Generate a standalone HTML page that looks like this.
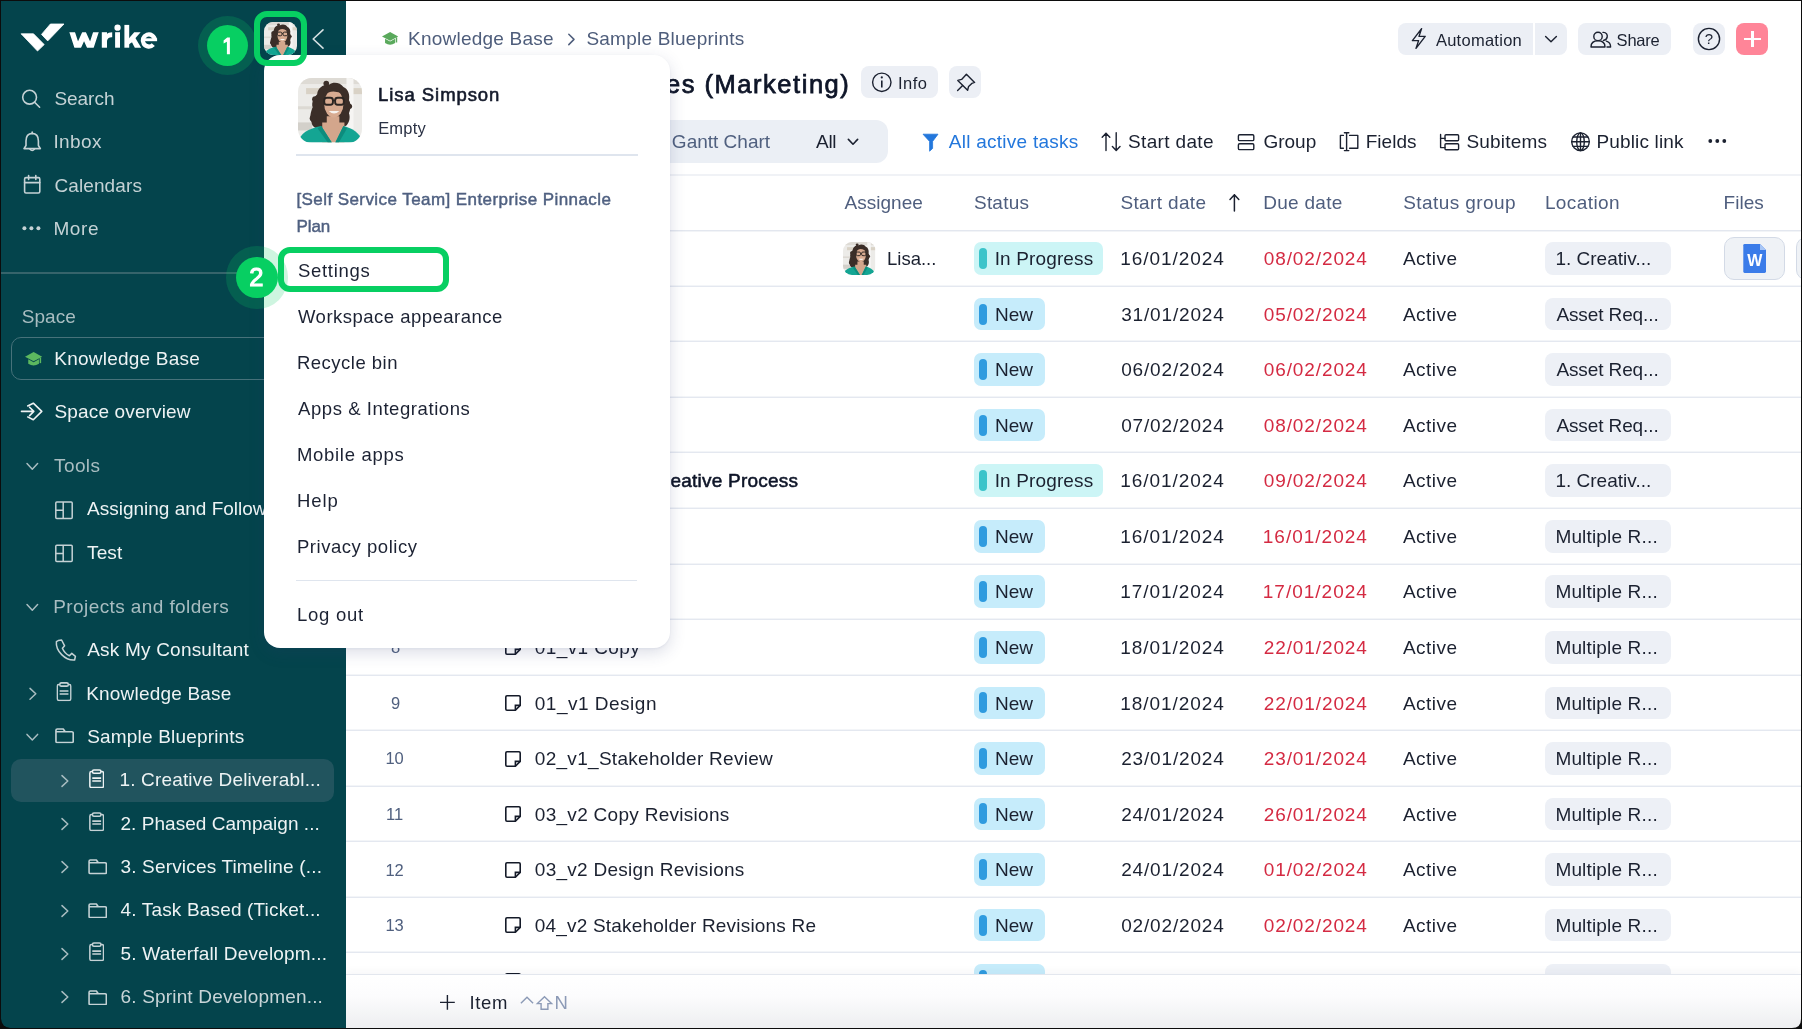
<!DOCTYPE html>
<html><head><meta charset="utf-8"><title>Wrike</title>
<style>
html,body{margin:0;padding:0;}
body{width:1802px;height:1029px;overflow:hidden;position:relative;background:#0c0c0c;font-family:'Liberation Sans', sans-serif;}
.layer{position:absolute;left:0;top:0;width:1802px;height:1029px;will-change:transform;}
.t{position:absolute;white-space:pre;line-height:0;font-family:'Liberation Sans', sans-serif;}
svg{display:block}
</style></head><body>
<svg width="0" height="0" style="position:absolute"><defs>
<symbol id="av" viewBox="0 0 64 64">
<rect width="64" height="64" fill="#ECEBE8"/>
<rect x="0" y="0" width="64" height="6" fill="#DEDBD5"/>
<rect x="8" y="10" width="56" height="6" fill="#D9D2C6"/>
<rect x="48" y="0" width="7" height="64" fill="#F6F5F3"/>
<rect x="0" y="28" width="14" height="3" fill="#DCD9D3"/>
<rect x="0" y="44" width="14" height="8" fill="#D3D0CA"/>
<path fill="#3B2E28" d="M13.5 44 C11 38 13 33 14.5 29 C13 24 16 19 19 16 C19.5 10 25 6 31 6.5 C35 3.5 42 4.5 45 9 C50 11 51.5 17 50.5 22 C53 26 52 31 50.5 35 C52 39 51 44 48 47 L44 49 L22 50 C17 50 14 48 13.5 44 Z"/>
<circle cx="15" cy="40" r="3.4" fill="#3B2E28"/><circle cx="17" cy="21" r="3" fill="#3B2E28"/><circle cx="51" cy="28" r="2.6" fill="#3B2E28"/><circle cx="28" cy="5.5" r="2.8" fill="#3B2E28"/>
<path d="M28.5 38 H41 V44 H46 V64 H24 V44 H28.5 Z" fill="#D3A68C"/>
<ellipse cx="35.5" cy="25.5" rx="9.6" ry="13.6" fill="#D8AB91"/>
<path d="M25.5 17 Q34 10 45.5 16.5 L45.5 13 Q35 7.5 25.5 13.5 Z" fill="#3B2E28"/>
<rect x="26" y="19.5" width="8.6" height="7" rx="2.5" fill="none" stroke="#2B2522" stroke-width="1.9"/>
<rect x="36.8" y="19.5" width="8.6" height="7" rx="2.5" fill="none" stroke="#2B2522" stroke-width="1.9"/>
<path d="M34.6 22.2 H36.8" stroke="#2B2522" stroke-width="1.5"/>
<path d="M30.5 32.6 Q35.8 37.6 41 32.6 Z" fill="#F7F3EF"/>
<path d="M0 64 C2 55 10 50 23 47.5 L33.5 64 Z" fill="#14A593"/>
<path d="M64 64 C62 55 55 50 45 47.5 L37 64 Z" fill="#14A593"/>
<path d="M23 47.5 L33.5 64 L29.5 64 L19.5 50 Z" fill="#0D8C7D"/>
<path d="M45 47.5 L37 64 L40.5 64 L48.5 50 Z" fill="#0D8C7D"/>
</symbol>
<symbol id="clip" viewBox="0 0 16 20">
<path d="M3.6 2.6 H2.6 Q0.9 2.6 0.9 4.3 V17.5 Q0.9 19.2 2.6 19.2 H13.4 Q15.1 19.2 15.1 17.5 V4.3 Q15.1 2.6 13.4 2.6 H12.4" fill="none" stroke="currentColor" stroke-width="1.6"/>
<rect x="3.6" y="0.9" width="8.8" height="3.4" rx="1.5" fill="none" stroke="currentColor" stroke-width="1.6"/>
<path d="M3.4 9.4 H12.6 M3.4 12.4 H12.6" stroke="currentColor" stroke-width="1.6"/>
</symbol>
<symbol id="folder" viewBox="0 0 20 16">
<path d="M1 14 V2.4 Q1 1 2.4 1 H8.6 L10.6 3.9 H17.6 Q19 3.9 19 5.3 V14 Q19 15.2 17.6 15.2 H2.4 Q1 15.2 1 14 Z M1 3.9 H10.6" fill="none" stroke="currentColor" stroke-width="1.7" stroke-linejoin="round"/>
</symbol>
<symbol id="task" viewBox="0 0 16 16">
<path d="M2 0.8 H14 Q15.2 0.8 15.2 2 V10.4 L10.4 15.2 H2 Q0.8 15.2 0.8 14 V2 Q0.8 0.8 2 0.8 Z" fill="none" stroke="#141A28" stroke-width="1.6" stroke-linejoin="round"/>
<path d="M15.2 10.4 H10.4 V15.2" fill="none" stroke="#141A28" stroke-width="1.6" stroke-linejoin="miter"/>
</symbol>
</defs></svg>
<div class="layer" id="L_base" style=""><div style="position:absolute;left:1.00px;top:1.00px;width:345.00px;height:1027.00px;background:#04444C;border-bottom-left-radius:9px;"></div>
<div style="position:absolute;left:346.00px;top:1.00px;width:1455.00px;height:1027.00px;background:#fff;border-bottom-right-radius:9px;"></div></div>
<div class="layer" id="L_side" style=""><svg style="position:absolute;left:20.00px;top:23.00px;overflow:visible;" width="140.00" height="29.00" viewBox="20.00 23.00 140.00 29.00"><path d="M21.1 33.8 L33.5 33.8 L44.2 44.6 L37.5 51 Z" fill="#fff" stroke="#fff" stroke-width="0.8" stroke-linejoin="round"/><path d="M50.4 24 L64 24 L47.7 40.9 L41.5 34.4 Z" fill="#fff" stroke="#fff" stroke-width="0.8" stroke-linejoin="round"/></svg>
<svg style="position:absolute;left:60.00px;top:20.00px;overflow:visible;" width="102.00" height="32.00" viewBox="60.00 20.00 102.00 32.00"><defs><clipPath id="wclip"><rect x="60" y="32.2" width="102" height="15.5"/></clipPath></defs><polyline points="70.9,28.2 77.6,48.9 84.05,34.6 90.5,48.9 97.2,28.2" fill="none" stroke="#fff" stroke-width="5.4" stroke-linejoin="miter" stroke-miterlimit="10" clip-path="url(#wclip)"/><rect x="101.8" y="32.2" width="5.2" height="15.5" fill="#fff"/><path d="M104.4 41 C104.4 35 107 32.2 112.2 32.2 V37.2 C109 37.2 107 38.6 107 42 Z" fill="#fff"/><rect x="115.1" y="32.2" width="4.9" height="15.5" fill="#fff"/><circle cx="117.55" cy="27.7" r="3.15" fill="#fff"/><rect x="124.4" y="24.9" width="4.8" height="22.8" fill="#fff"/><path d="M128.8 38.4 L134.2 32.2 H140.6 L131.6 42.4 L128.8 44.6 Z" fill="#fff"/><path d="M131.2 40.8 L134.6 36.8 L141.2 47.7 H134.8 Z" fill="#fff"/><path d="M154.9 40 A6.05 6.05 0 1 0 153.3 44.6" fill="none" stroke="#fff" stroke-width="4.3"/><rect x="143" y="38.3" width="14.1" height="2.9" fill="#fff"/></svg>
<svg style="position:absolute;left:310.00px;top:28.00px;overflow:visible;" width="16.00" height="22.00" viewBox="310.00 28.00 16.00 22.00"><path d="M323 29.8 L313.2 39 L323 48.2" fill="none" stroke="#D5E0E2" stroke-width="1.6" stroke-linecap="round" stroke-linejoin="round"/></svg>
<svg style="position:absolute;left:20.00px;top:88.00px;overflow:visible;" width="22.00" height="22.00" viewBox="20.00 88.00 22.00 22.00"><circle cx="29.6" cy="97.2" r="6.9" fill="none" stroke="#C5D2D5" stroke-width="1.6" stroke-linecap="round" stroke-linejoin="round"/><path d="M34.6 102.2 L39.6 107.2" fill="none" stroke="#C5D2D5" stroke-width="1.6" stroke-linecap="round" stroke-linejoin="round"/></svg>
<svg style="position:absolute;left:22.00px;top:130.00px;overflow:visible;" width="20.00" height="23.00" viewBox="22.00 130.00 20.00 23.00"><path d="M32.2 133.4 C27.5 133.6 26 137.5 26 141 V145.5 L24 148.6 H40.4 L38.4 145.5 V141 C38.4 137.5 36.9 133.6 32.2 133.4 Z" fill="none" stroke="#C5D2D5" stroke-width="1.6" stroke-linecap="round" stroke-linejoin="round"/><path d="M32.2 132 V133.4 M29.9 149 Q32.2 152 34.5 149" fill="none" stroke="#C5D2D5" stroke-width="1.6" stroke-linecap="round" stroke-linejoin="round"/></svg>
<svg style="position:absolute;left:22.00px;top:173.00px;overflow:visible;" width="20.00" height="22.00" viewBox="22.00 173.00 20.00 22.00"><rect x="24.6" y="177.6" width="15.2" height="15.4" rx="1.4" fill="none" stroke="#C5D2D5" stroke-width="1.6" stroke-linecap="round" stroke-linejoin="round"/><path d="M24.6 182.6 H39.8 M28.6 175.6 V179.4 M35.8 175.6 V179.4" fill="none" stroke="#C5D2D5" stroke-width="1.6" stroke-linecap="round" stroke-linejoin="round"/></svg>
<svg style="position:absolute;left:20.00px;top:224.00px;overflow:visible;" width="24.00" height="8.00" viewBox="20.00 224.00 24.00 8.00"><circle cx="24.4" cy="228.2" r="2" fill="#C5D2D5"/><circle cx="31.4" cy="228.2" r="2" fill="#C5D2D5"/><circle cx="38.4" cy="228.2" r="2" fill="#C5D2D5"/></svg>
<div class="t " style="left:54.40px;top:99.22px;font-size:19px;font-weight:400;color:#C5D2D5;letter-spacing:-0.027px;">Search</div>
<div class="t " style="left:53.40px;top:142.22px;font-size:19px;font-weight:400;color:#C5D2D5;letter-spacing:0.380px;">Inbox</div>
<div class="t " style="left:54.40px;top:185.52px;font-size:19px;font-weight:400;color:#C5D2D5;letter-spacing:0.112px;">Calendars</div>
<div class="t " style="left:53.40px;top:229.32px;font-size:19px;font-weight:400;color:#C5D2D5;letter-spacing:0.593px;">More</div>
<div style="position:absolute;left:1.00px;top:272.00px;width:345.00px;height:1.50px;background:#36646B;"></div>
<div class="t " style="left:21.80px;top:317.22px;font-size:19px;font-weight:400;color:#A9BDC1;letter-spacing:0.023px;">Space</div>
<div style="position:absolute;left:10.50px;top:337.40px;width:324.00px;height:42.80px;box-sizing:border-box;border:1.3px solid #47727A;border-radius:10px;"></div>
<svg style="position:absolute;left:24.00px;top:350.00px;overflow:visible;" width="20.00" height="18.00" viewBox="24.00 350.00 20.00 18.00"><path d="M25.00 356.65 L33.60 352.00 L42.20 356.65 L33.60 361.31 Z" fill="#5CB85F"/><path d="M28.24 359.28 L33.60 362.22 L38.96 359.28 V363.74 Q33.60 367.38 28.24 363.74 Z" fill="#5CB85F"/><path d="M40.38 357.67 V363.13" stroke="#5CB85F" stroke-width="1.52"/></svg>
<div class="t " style="left:54.30px;top:359.22px;font-size:19px;font-weight:400;color:#EEF3F4;letter-spacing:0.228px;">Knowledge Base</div>
<svg style="position:absolute;left:19.00px;top:400.00px;overflow:visible;" width="25.00" height="22.00" viewBox="19.00 400.00 25.00 22.00"><path d="M21.5 411.4 H33.5 M29.6 407.2 L33.8 411.4 L29.6 415.6" fill="none" stroke="#EEF3F4" stroke-width="1.6" stroke-linecap="round" stroke-linejoin="round"/><path d="M27.2 406.2 L33.3 403.2 L41.8 411.4 L33.3 419.8 L27.2 416.6" fill="none" stroke="#EEF3F4" stroke-width="1.6" stroke-linejoin="round"/></svg>
<div class="t " style="left:54.50px;top:412.42px;font-size:19px;font-weight:400;color:#EEF3F4;letter-spacing:0.146px;">Space overview</div>
<svg style="position:absolute;left:24.00px;top:460.00px;overflow:visible;" width="16.00" height="12.00" viewBox="24.00 460.00 16.00 12.00"><path d="M27.00 463.60 L32.30 469.20 L37.60 463.60" fill="none" stroke="#A9BDC1" stroke-width="1.5" stroke-linecap="round" stroke-linejoin="round"/></svg>
<div class="t " style="left:54.00px;top:466.32px;font-size:19px;font-weight:400;color:#A9BDC1;letter-spacing:0.411px;">Tools</div>
<svg style="position:absolute;left:54.00px;top:500.00px;overflow:visible;" width="20.00" height="20.00" viewBox="54.00 500.00 20.00 20.00"><rect x="55.80" y="502.10" width="16.4" height="16.4" rx="1" fill="none" stroke="#C5D2D5" stroke-width="1.5"/><path d="M63.20 502.10 V518.50 M55.80 510.30 H63.20" stroke="#C5D2D5" stroke-width="1.5"/></svg>
<div class="t " style="left:87.00px;top:509.22px;font-size:19px;font-weight:400;color:#EEF3F4;letter-spacing:0.000px;">Assigning and Following</div>
<svg style="position:absolute;left:54.00px;top:543.00px;overflow:visible;" width="20.00" height="20.00" viewBox="54.00 543.00 20.00 20.00"><rect x="55.80" y="545.20" width="16.4" height="16.4" rx="1" fill="none" stroke="#C5D2D5" stroke-width="1.5"/><path d="M63.20 545.20 V561.60 M55.80 553.40 H63.20" stroke="#C5D2D5" stroke-width="1.5"/></svg>
<div class="t " style="left:87.00px;top:552.92px;font-size:19px;font-weight:400;color:#EEF3F4;letter-spacing:0.144px;">Test</div>
<svg style="position:absolute;left:24.00px;top:602.00px;overflow:visible;" width="16.00" height="10.00" viewBox="24.00 602.00 16.00 10.00"><path d="M27.00 604.60 L32.30 610.20 L37.60 604.60" fill="none" stroke="#A9BDC1" stroke-width="1.5" stroke-linecap="round" stroke-linejoin="round"/></svg>
<div class="t " style="left:53.30px;top:606.62px;font-size:19px;font-weight:400;color:#A9BDC1;letter-spacing:0.399px;">Projects and folders</div>
<svg style="position:absolute;left:52.00px;top:637.00px;overflow:visible;" width="26.00" height="25.00" viewBox="52.00 637.00 26.00 25.00"><path d="M58.2 640.6 L61.6 640 L64.6 645.8 L62.4 648.2 C63.8 651.6 66.4 654.4 69.4 655.8 L71.8 653.4 L75.4 656.4 L74.6 660 C65.4 660.8 55.4 651 56.4 641.6 Z" fill="none" stroke="#C5D2D5" stroke-width="1.5" stroke-linejoin="round"/></svg>
<div class="t " style="left:87.20px;top:650.42px;font-size:19px;font-weight:400;color:#EEF3F4;letter-spacing:0.205px;">Ask My Consultant</div>
<svg style="position:absolute;left:26.00px;top:686.00px;overflow:visible;" width="14.00" height="15.00" viewBox="26.00 686.00 14.00 15.00"><path d="M30.00 688.40 L35.80 693.80 L30.00 699.20" fill="none" stroke="#A9BDC1" stroke-width="1.5" stroke-linecap="round" stroke-linejoin="round"/></svg>
<svg style="position:absolute;left:55.7px;top:682.4px;color:#C5D2D5" width="16.1" height="19.2" viewBox="0 0 16 20"><use href="#clip"/></svg>
<div class="t " style="left:86.20px;top:693.62px;font-size:19px;font-weight:400;color:#EEF3F4;letter-spacing:0.190px;">Knowledge Base</div>
<svg style="position:absolute;left:24.00px;top:731.00px;overflow:visible;" width="16.00" height="11.00" viewBox="24.00 731.00 16.00 11.00"><path d="M27.00 734.40 L32.30 740.00 L37.60 734.40" fill="none" stroke="#A9BDC1" stroke-width="1.5" stroke-linecap="round" stroke-linejoin="round"/></svg>
<svg style="position:absolute;left:54.9px;top:728.4px;color:#C5D2D5" width="19.2" height="15.4" viewBox="0 0 20 16"><use href="#folder"/></svg>
<div class="t " style="left:87.20px;top:737.02px;font-size:19px;font-weight:400;color:#EEF3F4;letter-spacing:0.182px;">Sample Blueprints</div>
<div style="position:absolute;left:10.70px;top:758.50px;width:323.50px;height:43.00px;background:#21545E;border-radius:10px;"></div>
<svg style="position:absolute;left:58.00px;top:773.60px;overflow:visible;" width="14.00" height="14.00" viewBox="58.00 773.60 14.00 14.00"><path d="M62.00 775.20 L67.80 780.60 L62.00 786.00" fill="none" stroke="#A9BDC1" stroke-width="1.5" stroke-linecap="round" stroke-linejoin="round"/></svg>
<svg style="position:absolute;left:89px;top:768.90px;color:#EEF3F4" width="15.4" height="19.4" viewBox="0 0 16 20"><use href="#clip"/></svg>
<div class="t " style="left:119.50px;top:780.22px;font-size:19px;font-weight:400;color:#EEF3F4;letter-spacing:0.159px;">1. Creative Deliverabl...</div>
<svg style="position:absolute;left:58.00px;top:816.96px;overflow:visible;" width="14.00" height="14.00" viewBox="58.00 816.96 14.00 14.00"><path d="M62.00 818.56 L67.80 823.96 L62.00 829.36" fill="none" stroke="#A9BDC1" stroke-width="1.5" stroke-linecap="round" stroke-linejoin="round"/></svg>
<svg style="position:absolute;left:89px;top:812.26px;color:#C5D2D5" width="15.4" height="19.4" viewBox="0 0 16 20"><use href="#clip"/></svg>
<div class="t " style="left:120.50px;top:823.58px;font-size:19px;font-weight:400;color:#EEF3F4;letter-spacing:0.034px;">2. Phased Campaign ...</div>
<svg style="position:absolute;left:58.00px;top:860.32px;overflow:visible;" width="14.00" height="14.00" viewBox="58.00 860.32 14.00 14.00"><path d="M62.00 861.92 L67.80 867.32 L62.00 872.72" fill="none" stroke="#A9BDC1" stroke-width="1.5" stroke-linecap="round" stroke-linejoin="round"/></svg>
<svg style="position:absolute;left:87.5px;top:859.42px;color:#C5D2D5" width="19.4" height="15.4" viewBox="0 0 20 16"><use href="#folder"/></svg>
<div class="t " style="left:120.50px;top:866.94px;font-size:19px;font-weight:400;color:#EEF3F4;letter-spacing:0.166px;">3. Services Timeline (...</div>
<svg style="position:absolute;left:58.00px;top:903.68px;overflow:visible;" width="14.00" height="14.00" viewBox="58.00 903.68 14.00 14.00"><path d="M62.00 905.28 L67.80 910.68 L62.00 916.08" fill="none" stroke="#A9BDC1" stroke-width="1.5" stroke-linecap="round" stroke-linejoin="round"/></svg>
<svg style="position:absolute;left:87.5px;top:902.78px;color:#C5D2D5" width="19.4" height="15.4" viewBox="0 0 20 16"><use href="#folder"/></svg>
<div class="t " style="left:120.50px;top:910.30px;font-size:19px;font-weight:400;color:#EEF3F4;letter-spacing:0.162px;">4. Task Based (Ticket...</div>
<svg style="position:absolute;left:58.00px;top:947.04px;overflow:visible;" width="14.00" height="14.00" viewBox="58.00 947.04 14.00 14.00"><path d="M62.00 948.64 L67.80 954.04 L62.00 959.44" fill="none" stroke="#A9BDC1" stroke-width="1.5" stroke-linecap="round" stroke-linejoin="round"/></svg>
<svg style="position:absolute;left:89px;top:942.34px;color:#C5D2D5" width="15.4" height="19.4" viewBox="0 0 16 20"><use href="#clip"/></svg>
<div class="t " style="left:120.50px;top:953.66px;font-size:19px;font-weight:400;color:#EEF3F4;letter-spacing:0.198px;">5. Waterfall Developm...</div>
<svg style="position:absolute;left:58.00px;top:990.40px;overflow:visible;" width="14.00" height="14.00" viewBox="58.00 990.40 14.00 14.00"><path d="M62.00 992.00 L67.80 997.40 L62.00 1002.80" fill="none" stroke="#A9BDC1" stroke-width="1.5" stroke-linecap="round" stroke-linejoin="round"/></svg>
<svg style="position:absolute;left:87.5px;top:989.50px;color:#C5D2D5" width="19.4" height="15.4" viewBox="0 0 20 16"><use href="#folder"/></svg>
<div class="t " style="left:120.50px;top:997.02px;font-size:19px;font-weight:400;color:#C9D5D8;letter-spacing:0.174px;">6. Sprint Developmen...</div></div>
<div class="layer" id="L_main" style="clip-path: inset(1px 1px 1px 346px);"><svg style="position:absolute;left:380.00px;top:30.00px;overflow:visible;" width="20.00" height="17.00" viewBox="380.00 30.00 20.00 17.00"><path d="M382.00 36.38 L390.10 32.00 L398.20 36.38 L390.10 40.77 Z" fill="#5AA95C"/><path d="M385.05 38.86 L390.10 41.62 L395.15 38.86 V43.05 Q390.10 46.48 385.05 43.05 Z" fill="#5AA95C"/><path d="M396.48 37.34 V42.48" stroke="#5AA95C" stroke-width="1.43"/></svg>
<div class="t " style="left:408.00px;top:39.42px;font-size:19px;font-weight:400;color:#4E5D7B;letter-spacing:0.228px;">Knowledge Base</div>
<svg style="position:absolute;left:565.00px;top:32.00px;overflow:visible;" width="13.00" height="15.00" viewBox="565.00 32.00 13.00 15.00"><path d="M568.8 34.2 L574 39.4 L568.8 44.6" fill="none" stroke="#4E5D7B" stroke-width="1.5" stroke-linecap="round" stroke-linejoin="round"/></svg>
<div class="t " style="left:586.40px;top:39.42px;font-size:19px;font-weight:400;color:#4E5D7B;letter-spacing:0.232px;">Sample Blueprints</div>
<div class="t " style="left:666.00px;top:83.66px;font-size:25.5px;font-weight:400;color:#0E1528;letter-spacing:1.525px;-webkit-text-stroke:0.75px currentColor;">es (Marketing)</div>
<div style="position:absolute;left:860.70px;top:66.00px;width:77.30px;height:32.20px;background:#ECEFF5;border-radius:8px;"></div>
<svg style="position:absolute;left:870.00px;top:72.00px;overflow:visible;" width="24.00" height="21.00" viewBox="870.00 72.00 24.00 21.00"><circle cx="881.8" cy="82.3" r="9.2" fill="none" stroke="#1B2130" stroke-width="1.4"/><path d="M881.8 80.4 V87.6" stroke="#1B2130" stroke-width="1.6"/><circle cx="881.8" cy="77.4" r="1.1" fill="#1B2130"/></svg>
<div class="t " style="left:898.00px;top:82.58px;font-size:16.5px;font-weight:400;color:#1B2130;letter-spacing:0.452px;">Info</div>
<div style="position:absolute;left:949.10px;top:66.00px;width:32.40px;height:32.20px;background:#ECEFF5;border-radius:8px;"></div>
<svg style="position:absolute;left:955.00px;top:72.00px;overflow:visible;" width="21.00" height="21.00" viewBox="955.00 72.00 21.00 21.00"><path d="M966.4 74.2 L974.6 82.4 L971.8 83.4 L968.6 86.4 L967.6 90.2 L957.8 80.4 L961.6 79.4 L964.6 76.2 Z" fill="none" stroke="#1B2130" stroke-width="1.4" stroke-linejoin="round"/><path d="M962.6 85.4 L957.6 90.4" stroke="#1B2130" stroke-width="1.4" stroke-linecap="round"/></svg>
<div style="position:absolute;left:1397.60px;top:23.00px;width:169.40px;height:32.00px;background:#ECEFF5;border-radius:8px;"></div>
<div style="position:absolute;left:1533.20px;top:23.00px;width:2.00px;height:32.00px;background:#fff;"></div>
<svg style="position:absolute;left:1408.00px;top:26.00px;overflow:visible;" width="22.00" height="25.00" viewBox="1408.00 26.00 22.00 25.00"><path d="M1421.6 28.6 L1412.4 40.6 H1418.6 L1416 48.4 L1425.2 36.4 H1419 Z" fill="none" stroke="#1B2130" stroke-width="1.4" stroke-linejoin="round"/></svg>
<div class="t " style="left:1435.90px;top:39.58px;font-size:16.5px;font-weight:400;color:#1B2130;letter-spacing:0.268px;">Automation</div>
<svg style="position:absolute;left:1542.00px;top:33.00px;overflow:visible;" width="18.00" height="13.00" viewBox="1542.00 33.00 18.00 13.00"><path d="M1545.6 36.4 L1551 41.8 L1556.4 36.4" fill="none" stroke="#1B2130" stroke-width="1.4" stroke-linecap="round" stroke-linejoin="round"/></svg>
<div style="position:absolute;left:1578.30px;top:23.00px;width:92.40px;height:32.00px;background:#ECEFF5;border-radius:8px;"></div>
<svg style="position:absolute;left:1588.00px;top:29.00px;overflow:visible;" width="26.00" height="21.00" viewBox="1588.00 29.00 26.00 21.00"><circle cx="1598" cy="36.4" r="4.2" fill="none" stroke="#1B2130" stroke-width="1.4"/><path d="M1591 47 C1591 42.6 1594 40.8 1598 40.8 C1602 40.8 1605 42.6 1605 47 Z" fill="none" stroke="#1B2130" stroke-width="1.4" stroke-linejoin="round"/><path d="M1603 32.4 C1606.6 32.2 1607.6 35 1607.2 37 C1606.8 39 1605 40.2 1603.4 40.4 M1606.4 41.2 C1609 42 1610.6 43.6 1610.6 47 H1607" fill="none" stroke="#1B2130" stroke-width="1.4" stroke-linecap="round" stroke-linejoin="round"/></svg>
<div class="t " style="left:1616.60px;top:39.58px;font-size:16.5px;font-weight:400;color:#1B2130;letter-spacing:-0.213px;">Share</div>
<div style="position:absolute;left:1693.00px;top:23.00px;width:32.00px;height:32.00px;background:#ECEFF5;border-radius:8px;"></div>
<svg style="position:absolute;left:1695.00px;top:26.00px;overflow:visible;" width="28.00" height="26.00" viewBox="1695.00 26.00 28.00 26.00"><circle cx="1709" cy="39" r="10.6" fill="none" stroke="#1B2130" stroke-width="1.4"/></svg>
<div class="t " style="left:1709.00px;top:39.40px;font-size:15px;font-weight:400;color:#1B2130;letter-spacing:0.000px;transform:translateX(-50%);">?</div>
<div style="position:absolute;left:1736.30px;top:23.00px;width:32.10px;height:32.00px;background:#FF8598;border-radius:8px;"></div>
<div style="position:absolute;left:1744.00px;top:37.80px;width:16.60px;height:2.60px;background:#fff;"></div>
<div style="position:absolute;left:1751.00px;top:30.80px;width:2.60px;height:16.60px;background:#fff;"></div>
<div style="position:absolute;left:380.00px;top:120.20px;width:507.70px;height:43.00px;background:#EBEFF5;border-radius:12px;"></div>
<div class="t " style="left:671.87px;top:142.02px;font-size:19px;font-weight:400;color:#50607F;letter-spacing:0.000px;">Gantt Chart</div>
<div class="t " style="left:816.10px;top:142.02px;font-size:19px;font-weight:400;color:#1B2130;letter-spacing:-0.347px;">All</div>
<svg style="position:absolute;left:845.00px;top:136.00px;overflow:visible;" width="16.00" height="12.00" viewBox="845.00 136.00 16.00 12.00"><path d="M848.4 139.4 L853 144.2 L857.6 139.4" fill="none" stroke="#1B2130" stroke-width="1.6" stroke-linecap="round" stroke-linejoin="round"/></svg>
<svg style="position:absolute;left:921.00px;top:132.00px;overflow:visible;" width="19.00" height="21.00" viewBox="921.00 132.00 19.00 21.00"><path d="M923 134.2 H938 L932.6 141.4 V148.4 L929.6 151.2 V141.4 Z" fill="#2377DC" stroke="#2377DC" stroke-width="0.8" stroke-linejoin="round"/></svg>
<div class="t " style="left:948.80px;top:141.92px;font-size:19px;font-weight:400;color:#2377DC;letter-spacing:0.257px;">All active tasks</div>
<svg style="position:absolute;left:1100.00px;top:130.00px;overflow:visible;" width="22.00" height="23.00" viewBox="1100.00 130.00 22.00 23.00"><path d="M1106 150.6 V133.2 M1102.2 137.2 L1106 133.2 L1109.8 137.2 M1116.2 132.8 V150.4 M1112.4 146.4 L1116.2 150.4 L1120 146.4" fill="none" stroke="#1B2130" stroke-width="1.4" stroke-linecap="round" stroke-linejoin="round"/></svg>
<div class="t " style="left:1128.00px;top:141.82px;font-size:19px;font-weight:400;color:#1B2130;letter-spacing:0.354px;">Start date</div>
<svg style="position:absolute;left:1236.00px;top:132.00px;overflow:visible;" width="20.00" height="20.00" viewBox="1236.00 132.00 20.00 20.00"><rect x="1238.4" y="134.8" width="15.4" height="5.8" rx="1.2" fill="none" stroke="#1B2130" stroke-width="1.4" stroke-linecap="round" stroke-linejoin="round"/><rect x="1238.4" y="143.8" width="15.4" height="5.8" rx="1.2" fill="none" stroke="#1B2130" stroke-width="1.4" stroke-linecap="round" stroke-linejoin="round"/></svg>
<div class="t " style="left:1263.40px;top:141.82px;font-size:19px;font-weight:400;color:#1B2130;letter-spacing:0.015px;">Group</div>
<svg style="position:absolute;left:1338.00px;top:130.00px;overflow:visible;" width="22.00" height="23.00" viewBox="1338.00 130.00 22.00 23.00"><path d="M1343.4 135.4 H1340.4 V148.2 H1343.4 M1349.6 135.4 H1357.8 V148.2 H1349.6 M1346.6 132.8 V150.6 M1344.4 132.8 H1348.8 M1344.4 150.6 H1348.8" fill="none" stroke="#1B2130" stroke-width="1.4" stroke-linecap="round" stroke-linejoin="round"/></svg>
<div class="t " style="left:1365.70px;top:141.82px;font-size:19px;font-weight:400;color:#1B2130;letter-spacing:0.024px;">Fields</div>
<svg style="position:absolute;left:1438.00px;top:132.00px;overflow:visible;" width="23.00" height="20.00" viewBox="1438.00 132.00 23.00 20.00"><path d="M1440.6 134.4 V147.6 H1445" fill="none" stroke="#1B2130" stroke-width="1.4" stroke-linecap="round" stroke-linejoin="round"/><path d="M1440.6 138.4 H1445" fill="none" stroke="#1B2130" stroke-width="1.4" stroke-linecap="round" stroke-linejoin="round"/><rect x="1445" y="134.8" width="13.6" height="6" rx="1" fill="none" stroke="#1B2130" stroke-width="1.4" stroke-linecap="round" stroke-linejoin="round"/><rect x="1445" y="143.8" width="13.6" height="6" rx="1" fill="none" stroke="#1B2130" stroke-width="1.4" stroke-linecap="round" stroke-linejoin="round"/></svg>
<div class="t " style="left:1466.40px;top:141.82px;font-size:19px;font-weight:400;color:#1B2130;letter-spacing:0.186px;">Subitems</div>
<svg style="position:absolute;left:1569.00px;top:130.00px;overflow:visible;" width="24.00" height="23.00" viewBox="1569.00 130.00 24.00 23.00"><circle cx="1580.5" cy="141.7" r="8.8" fill="none" stroke="#1B2130" stroke-width="1.4" stroke-linecap="round" stroke-linejoin="round"/><ellipse cx="1580.5" cy="141.7" rx="3.8" ry="8.8" fill="none" stroke="#1B2130" stroke-width="1.4" stroke-linecap="round" stroke-linejoin="round"/><path d="M1571.7 141.7 H1589.3 M1573 137 H1588 M1573 146.4 H1588 M1580.5 132.9 V150.5" fill="none" stroke="#1B2130" stroke-width="1.4" stroke-linecap="round" stroke-linejoin="round"/></svg>
<div class="t " style="left:1596.40px;top:141.82px;font-size:19px;font-weight:400;color:#1B2130;letter-spacing:0.166px;">Public link</div>
<svg style="position:absolute;left:1706.00px;top:138.00px;overflow:visible;" width="22.00" height="6.00" viewBox="1706.00 138.00 22.00 6.00"><circle cx="1710.3" cy="141" r="1.9" fill="#1B2130"/><circle cx="1717.3" cy="141" r="1.9" fill="#1B2130"/><circle cx="1724.3" cy="141" r="1.9" fill="#1B2130"/></svg>
<div style="position:absolute;left:346.00px;top:174.00px;width:1455.00px;height:2.00px;background:#F0F2F6;"></div>
<div class="t " style="left:844.50px;top:203.42px;font-size:19px;font-weight:400;color:#4F5E7E;letter-spacing:0.029px;">Assignee</div>
<div class="t " style="left:974.00px;top:203.42px;font-size:19px;font-weight:400;color:#4F5E7E;letter-spacing:0.207px;">Status</div>
<div class="t " style="left:1120.40px;top:203.42px;font-size:19px;font-weight:400;color:#4F5E7E;letter-spacing:0.365px;">Start date</div>
<div class="t " style="left:1263.20px;top:203.42px;font-size:19px;font-weight:400;color:#4F5E7E;letter-spacing:0.279px;">Due date</div>
<div class="t " style="left:1403.20px;top:203.42px;font-size:19px;font-weight:400;color:#4F5E7E;letter-spacing:0.421px;">Status group</div>
<div class="t " style="left:1544.90px;top:203.42px;font-size:19px;font-weight:400;color:#4F5E7E;letter-spacing:0.405px;">Location</div>
<div class="t " style="left:1723.60px;top:203.42px;font-size:19px;font-weight:400;color:#4F5E7E;letter-spacing:-0.004px;">Files</div>
<svg style="position:absolute;left:1226.00px;top:192.00px;overflow:visible;" width="17.00" height="21.00" viewBox="1226.00 192.00 17.00 21.00"><path d="M1234.4 211 V194.8 M1230 199.4 L1234.4 194.8 L1238.8 199.4" fill="none" stroke="#1B2130" stroke-width="1.5" stroke-linecap="round" stroke-linejoin="round"/></svg>
<div style="position:absolute;left:346.00px;top:230.00px;width:1455.00px;height:2.00px;background:linear-gradient(#E3E7EF 50%, #F2F4F7 50%);"></div>
<div class="t " style="left:394.60px;top:258.18px;font-size:16.5px;font-weight:400;color:#50607F;letter-spacing:0.000px;transform:translateX(-50%);">1</div>
<svg style="position:absolute;left:505px;top:251px" width="16" height="16" viewBox="0 0 16 16"><use href="#task"/></svg>
<div style="position:absolute;left:974.00px;top:242.22px;width:129.40px;height:32.60px;background:#CCF5F6;border-radius:7px;"></div>
<div style="position:absolute;left:978.90px;top:248.02px;width:8.10px;height:21.00px;background:#3CC4CA;border-radius:4px;"></div>
<div class="t " style="left:994.70px;top:258.92px;font-size:19px;font-weight:400;color:#1B2130;letter-spacing:0.135px;">In Progress</div>
<div class="t " style="left:1120.20px;top:258.92px;font-size:19px;font-weight:400;color:#1B2130;letter-spacing:0.942px;">16/01/2024</div>
<div class="t " style="left:1263.80px;top:258.92px;font-size:19px;font-weight:400;color:#D42A42;letter-spacing:0.886px;">08/02/2024</div>
<div class="t " style="left:1403.00px;top:258.92px;font-size:19px;font-weight:400;color:#1B2130;letter-spacing:0.445px;">Active</div>
<div style="position:absolute;left:1545.20px;top:242.22px;width:125.60px;height:32.60px;background:#EDF0F6;border-radius:8px;"></div>
<div class="t " style="left:1555.40px;top:258.92px;font-size:19px;font-weight:400;color:#1B2130;letter-spacing:0.012px;">1. Creativ...</div>
<div style="position:absolute;left:346.00px;top:285.00px;width:1455.00px;height:2.00px;background:linear-gradient(#F3F5F8 50%, #E4E8F0 50%);"></div>
<div class="t " style="left:395.60px;top:313.76px;font-size:16.5px;font-weight:400;color:#50607F;letter-spacing:0.000px;transform:translateX(-50%);">2</div>
<svg style="position:absolute;left:505px;top:306px" width="16" height="16" viewBox="0 0 16 16"><use href="#task"/></svg>
<div style="position:absolute;left:974.00px;top:297.77px;width:71.00px;height:32.60px;background:#C6ECFB;border-radius:7px;"></div>
<div style="position:absolute;left:978.90px;top:303.57px;width:8.10px;height:21.00px;background:#2F9BDF;border-radius:4px;"></div>
<div class="t " style="left:994.90px;top:314.50px;font-size:19px;font-weight:400;color:#1B2130;letter-spacing:0.056px;">New</div>
<div class="t " style="left:1121.20px;top:314.50px;font-size:19px;font-weight:400;color:#1B2130;letter-spacing:0.830px;">31/01/2024</div>
<div class="t " style="left:1263.80px;top:314.50px;font-size:19px;font-weight:400;color:#D42A42;letter-spacing:0.886px;">05/02/2024</div>
<div class="t " style="left:1403.00px;top:314.50px;font-size:19px;font-weight:400;color:#1B2130;letter-spacing:0.445px;">Active</div>
<div style="position:absolute;left:1545.20px;top:297.77px;width:125.60px;height:32.60px;background:#EDF0F6;border-radius:8px;"></div>
<div class="t " style="left:1556.40px;top:314.50px;font-size:19px;font-weight:400;color:#1B2130;letter-spacing:-0.110px;">Asset Req...</div>
<div style="position:absolute;left:346.00px;top:340.00px;width:1455.00px;height:2.00px;background:linear-gradient(#F3F5F8 50%, #E4E8F0 50%);"></div>
<div class="t " style="left:395.60px;top:369.34px;font-size:16.5px;font-weight:400;color:#50607F;letter-spacing:0.000px;transform:translateX(-50%);">3</div>
<svg style="position:absolute;left:505px;top:362px" width="16" height="16" viewBox="0 0 16 16"><use href="#task"/></svg>
<div style="position:absolute;left:974.00px;top:353.31px;width:71.00px;height:32.60px;background:#C6ECFB;border-radius:7px;"></div>
<div style="position:absolute;left:978.90px;top:359.11px;width:8.10px;height:21.00px;background:#2F9BDF;border-radius:4px;"></div>
<div class="t " style="left:994.90px;top:370.08px;font-size:19px;font-weight:400;color:#1B2130;letter-spacing:0.056px;">New</div>
<div class="t " style="left:1121.20px;top:370.08px;font-size:19px;font-weight:400;color:#1B2130;letter-spacing:0.830px;">06/02/2024</div>
<div class="t " style="left:1263.80px;top:370.08px;font-size:19px;font-weight:400;color:#D42A42;letter-spacing:0.886px;">06/02/2024</div>
<div class="t " style="left:1403.00px;top:370.08px;font-size:19px;font-weight:400;color:#1B2130;letter-spacing:0.445px;">Active</div>
<div style="position:absolute;left:1545.20px;top:353.31px;width:125.60px;height:32.60px;background:#EDF0F6;border-radius:8px;"></div>
<div class="t " style="left:1556.40px;top:370.08px;font-size:19px;font-weight:400;color:#1B2130;letter-spacing:-0.110px;">Asset Req...</div>
<div style="position:absolute;left:346.00px;top:396.00px;width:1455.00px;height:2.00px;background:linear-gradient(#F3F5F8 50%, #E4E8F0 50%);"></div>
<div class="t " style="left:395.60px;top:424.92px;font-size:16.5px;font-weight:400;color:#50607F;letter-spacing:0.000px;transform:translateX(-50%);">4</div>
<svg style="position:absolute;left:505px;top:417px" width="16" height="16" viewBox="0 0 16 16"><use href="#task"/></svg>
<div style="position:absolute;left:974.00px;top:408.86px;width:71.00px;height:32.60px;background:#C6ECFB;border-radius:7px;"></div>
<div style="position:absolute;left:978.90px;top:414.66px;width:8.10px;height:21.00px;background:#2F9BDF;border-radius:4px;"></div>
<div class="t " style="left:994.90px;top:425.66px;font-size:19px;font-weight:400;color:#1B2130;letter-spacing:0.056px;">New</div>
<div class="t " style="left:1121.20px;top:425.66px;font-size:19px;font-weight:400;color:#1B2130;letter-spacing:0.830px;">07/02/2024</div>
<div class="t " style="left:1263.80px;top:425.66px;font-size:19px;font-weight:400;color:#D42A42;letter-spacing:0.886px;">08/02/2024</div>
<div class="t " style="left:1403.00px;top:425.66px;font-size:19px;font-weight:400;color:#1B2130;letter-spacing:0.445px;">Active</div>
<div style="position:absolute;left:1545.20px;top:408.86px;width:125.60px;height:32.60px;background:#EDF0F6;border-radius:8px;"></div>
<div class="t " style="left:1556.40px;top:425.66px;font-size:19px;font-weight:400;color:#1B2130;letter-spacing:-0.110px;">Asset Req...</div>
<div style="position:absolute;left:346.00px;top:451.00px;width:1455.00px;height:2.00px;background:linear-gradient(#F3F5F8 50%, #E4E8F0 50%);"></div>
<div class="t " style="left:395.60px;top:480.50px;font-size:16.5px;font-weight:400;color:#50607F;letter-spacing:0.000px;transform:translateX(-50%);">5</div>
<div class="t " style="left:670.50px;top:481.24px;font-size:19px;font-weight:400;color:#0E1528;letter-spacing:0.230px;-webkit-text-stroke:0.55px currentColor;">eative Process</div>
<div style="position:absolute;left:974.00px;top:464.40px;width:129.40px;height:32.60px;background:#CCF5F6;border-radius:7px;"></div>
<div style="position:absolute;left:978.90px;top:470.20px;width:8.10px;height:21.00px;background:#3CC4CA;border-radius:4px;"></div>
<div class="t " style="left:994.70px;top:481.24px;font-size:19px;font-weight:400;color:#1B2130;letter-spacing:0.135px;">In Progress</div>
<div class="t " style="left:1120.20px;top:481.24px;font-size:19px;font-weight:400;color:#1B2130;letter-spacing:0.942px;">16/01/2024</div>
<div class="t " style="left:1263.80px;top:481.24px;font-size:19px;font-weight:400;color:#D42A42;letter-spacing:0.886px;">09/02/2024</div>
<div class="t " style="left:1403.00px;top:481.24px;font-size:19px;font-weight:400;color:#1B2130;letter-spacing:0.445px;">Active</div>
<div style="position:absolute;left:1545.20px;top:464.40px;width:125.60px;height:32.60px;background:#EDF0F6;border-radius:8px;"></div>
<div class="t " style="left:1555.40px;top:481.24px;font-size:19px;font-weight:400;color:#1B2130;letter-spacing:0.012px;">1. Creativ...</div>
<div style="position:absolute;left:346.00px;top:507.00px;width:1455.00px;height:2.00px;background:linear-gradient(#F3F5F8 50%, #E4E8F0 50%);"></div>
<div class="t " style="left:395.60px;top:536.08px;font-size:16.5px;font-weight:400;color:#50607F;letter-spacing:0.000px;transform:translateX(-50%);">6</div>
<svg style="position:absolute;left:505px;top:528px" width="16" height="16" viewBox="0 0 16 16"><use href="#task"/></svg>
<div style="position:absolute;left:974.00px;top:519.95px;width:71.00px;height:32.60px;background:#C6ECFB;border-radius:7px;"></div>
<div style="position:absolute;left:978.90px;top:525.75px;width:8.10px;height:21.00px;background:#2F9BDF;border-radius:4px;"></div>
<div class="t " style="left:994.90px;top:536.82px;font-size:19px;font-weight:400;color:#1B2130;letter-spacing:0.056px;">New</div>
<div class="t " style="left:1120.20px;top:536.82px;font-size:19px;font-weight:400;color:#1B2130;letter-spacing:0.942px;">16/01/2024</div>
<div class="t " style="left:1262.80px;top:536.82px;font-size:19px;font-weight:400;color:#D42A42;letter-spacing:0.997px;">16/01/2024</div>
<div class="t " style="left:1403.00px;top:536.82px;font-size:19px;font-weight:400;color:#1B2130;letter-spacing:0.445px;">Active</div>
<div style="position:absolute;left:1545.20px;top:519.95px;width:125.60px;height:32.60px;background:#EDF0F6;border-radius:8px;"></div>
<div class="t " style="left:1555.40px;top:536.82px;font-size:19px;font-weight:400;color:#1B2130;letter-spacing:0.164px;">Multiple R...</div>
<div style="position:absolute;left:346.00px;top:563.00px;width:1455.00px;height:2.00px;background:linear-gradient(#F3F5F8 50%, #E4E8F0 50%);"></div>
<div class="t " style="left:395.60px;top:591.66px;font-size:16.5px;font-weight:400;color:#50607F;letter-spacing:0.000px;transform:translateX(-50%);">7</div>
<svg style="position:absolute;left:505px;top:584px" width="16" height="16" viewBox="0 0 16 16"><use href="#task"/></svg>
<div style="position:absolute;left:974.00px;top:575.49px;width:71.00px;height:32.60px;background:#C6ECFB;border-radius:7px;"></div>
<div style="position:absolute;left:978.90px;top:581.29px;width:8.10px;height:21.00px;background:#2F9BDF;border-radius:4px;"></div>
<div class="t " style="left:994.90px;top:592.40px;font-size:19px;font-weight:400;color:#1B2130;letter-spacing:0.056px;">New</div>
<div class="t " style="left:1120.20px;top:592.40px;font-size:19px;font-weight:400;color:#1B2130;letter-spacing:0.942px;">17/01/2024</div>
<div class="t " style="left:1262.80px;top:592.40px;font-size:19px;font-weight:400;color:#D42A42;letter-spacing:0.997px;">17/01/2024</div>
<div class="t " style="left:1403.00px;top:592.40px;font-size:19px;font-weight:400;color:#1B2130;letter-spacing:0.445px;">Active</div>
<div style="position:absolute;left:1545.20px;top:575.49px;width:125.60px;height:32.60px;background:#EDF0F6;border-radius:8px;"></div>
<div class="t " style="left:1555.40px;top:592.40px;font-size:19px;font-weight:400;color:#1B2130;letter-spacing:0.164px;">Multiple R...</div>
<div style="position:absolute;left:346.00px;top:618.00px;width:1455.00px;height:2.00px;background:linear-gradient(#F3F5F8 50%, #E4E8F0 50%);"></div>
<div class="t " style="left:395.60px;top:647.24px;font-size:16.5px;font-weight:400;color:#50607F;letter-spacing:0.000px;transform:translateX(-50%);">8</div>
<svg style="position:absolute;left:505px;top:639px" width="16" height="16" viewBox="0 0 16 16"><use href="#task"/></svg>
<div class="t " style="left:534.80px;top:647.98px;font-size:19px;font-weight:400;color:#1B2130;letter-spacing:0.400px;">01_v1 Copy</div>
<div style="position:absolute;left:974.00px;top:631.04px;width:71.00px;height:32.60px;background:#C6ECFB;border-radius:7px;"></div>
<div style="position:absolute;left:978.90px;top:636.84px;width:8.10px;height:21.00px;background:#2F9BDF;border-radius:4px;"></div>
<div class="t " style="left:994.90px;top:647.98px;font-size:19px;font-weight:400;color:#1B2130;letter-spacing:0.056px;">New</div>
<div class="t " style="left:1120.20px;top:647.98px;font-size:19px;font-weight:400;color:#1B2130;letter-spacing:0.942px;">18/01/2024</div>
<div class="t " style="left:1263.80px;top:647.98px;font-size:19px;font-weight:400;color:#D42A42;letter-spacing:0.886px;">22/01/2024</div>
<div class="t " style="left:1403.00px;top:647.98px;font-size:19px;font-weight:400;color:#1B2130;letter-spacing:0.445px;">Active</div>
<div style="position:absolute;left:1545.20px;top:631.04px;width:125.60px;height:32.60px;background:#EDF0F6;border-radius:8px;"></div>
<div class="t " style="left:1555.40px;top:647.98px;font-size:19px;font-weight:400;color:#1B2130;letter-spacing:0.164px;">Multiple R...</div>
<div style="position:absolute;left:346.00px;top:674.00px;width:1455.00px;height:2.00px;background:linear-gradient(#F3F5F8 50%, #E4E8F0 50%);"></div>
<div class="t " style="left:395.60px;top:702.82px;font-size:16.5px;font-weight:400;color:#50607F;letter-spacing:0.000px;transform:translateX(-50%);">9</div>
<svg style="position:absolute;left:505px;top:695px" width="16" height="16" viewBox="0 0 16 16"><use href="#task"/></svg>
<div class="t " style="left:534.80px;top:703.56px;font-size:19px;font-weight:400;color:#1B2130;letter-spacing:0.498px;">01_v1 Design</div>
<div style="position:absolute;left:974.00px;top:686.58px;width:71.00px;height:32.60px;background:#C6ECFB;border-radius:7px;"></div>
<div style="position:absolute;left:978.90px;top:692.38px;width:8.10px;height:21.00px;background:#2F9BDF;border-radius:4px;"></div>
<div class="t " style="left:994.90px;top:703.56px;font-size:19px;font-weight:400;color:#1B2130;letter-spacing:0.056px;">New</div>
<div class="t " style="left:1120.20px;top:703.56px;font-size:19px;font-weight:400;color:#1B2130;letter-spacing:0.942px;">18/01/2024</div>
<div class="t " style="left:1263.80px;top:703.56px;font-size:19px;font-weight:400;color:#D42A42;letter-spacing:0.886px;">22/01/2024</div>
<div class="t " style="left:1403.00px;top:703.56px;font-size:19px;font-weight:400;color:#1B2130;letter-spacing:0.445px;">Active</div>
<div style="position:absolute;left:1545.20px;top:686.58px;width:125.60px;height:32.60px;background:#EDF0F6;border-radius:8px;"></div>
<div class="t " style="left:1555.40px;top:703.56px;font-size:19px;font-weight:400;color:#1B2130;letter-spacing:0.164px;">Multiple R...</div>
<div style="position:absolute;left:346.00px;top:729.00px;width:1455.00px;height:2.00px;background:linear-gradient(#F3F5F8 50%, #E4E8F0 50%);"></div>
<div class="t " style="left:394.60px;top:758.40px;font-size:16.5px;font-weight:400;color:#50607F;letter-spacing:0.000px;transform:translateX(-50%);">10</div>
<svg style="position:absolute;left:505px;top:751px" width="16" height="16" viewBox="0 0 16 16"><use href="#task"/></svg>
<div class="t " style="left:534.80px;top:759.14px;font-size:19px;font-weight:400;color:#1B2130;letter-spacing:0.292px;">02_v1_Stakeholder Review</div>
<div style="position:absolute;left:974.00px;top:742.13px;width:71.00px;height:32.60px;background:#C6ECFB;border-radius:7px;"></div>
<div style="position:absolute;left:978.90px;top:747.93px;width:8.10px;height:21.00px;background:#2F9BDF;border-radius:4px;"></div>
<div class="t " style="left:994.90px;top:759.14px;font-size:19px;font-weight:400;color:#1B2130;letter-spacing:0.056px;">New</div>
<div class="t " style="left:1121.20px;top:759.14px;font-size:19px;font-weight:400;color:#1B2130;letter-spacing:0.830px;">23/01/2024</div>
<div class="t " style="left:1263.80px;top:759.14px;font-size:19px;font-weight:400;color:#D42A42;letter-spacing:0.886px;">23/01/2024</div>
<div class="t " style="left:1403.00px;top:759.14px;font-size:19px;font-weight:400;color:#1B2130;letter-spacing:0.445px;">Active</div>
<div style="position:absolute;left:1545.20px;top:742.13px;width:125.60px;height:32.60px;background:#EDF0F6;border-radius:8px;"></div>
<div class="t " style="left:1555.40px;top:759.14px;font-size:19px;font-weight:400;color:#1B2130;letter-spacing:0.164px;">Multiple R...</div>
<div style="position:absolute;left:346.00px;top:785.00px;width:1455.00px;height:2.00px;background:linear-gradient(#F3F5F8 50%, #E4E8F0 50%);"></div>
<div class="t " style="left:394.60px;top:813.98px;font-size:16.5px;font-weight:400;color:#50607F;letter-spacing:0.000px;transform:translateX(-50%);">11</div>
<svg style="position:absolute;left:505px;top:806px" width="16" height="16" viewBox="0 0 16 16"><use href="#task"/></svg>
<div class="t " style="left:534.80px;top:814.72px;font-size:19px;font-weight:400;color:#1B2130;letter-spacing:0.287px;">03_v2 Copy Revisions</div>
<div style="position:absolute;left:974.00px;top:797.67px;width:71.00px;height:32.60px;background:#C6ECFB;border-radius:7px;"></div>
<div style="position:absolute;left:978.90px;top:803.47px;width:8.10px;height:21.00px;background:#2F9BDF;border-radius:4px;"></div>
<div class="t " style="left:994.90px;top:814.72px;font-size:19px;font-weight:400;color:#1B2130;letter-spacing:0.056px;">New</div>
<div class="t " style="left:1121.20px;top:814.72px;font-size:19px;font-weight:400;color:#1B2130;letter-spacing:0.830px;">24/01/2024</div>
<div class="t " style="left:1263.80px;top:814.72px;font-size:19px;font-weight:400;color:#D42A42;letter-spacing:0.886px;">26/01/2024</div>
<div class="t " style="left:1403.00px;top:814.72px;font-size:19px;font-weight:400;color:#1B2130;letter-spacing:0.445px;">Active</div>
<div style="position:absolute;left:1545.20px;top:797.67px;width:125.60px;height:32.60px;background:#EDF0F6;border-radius:8px;"></div>
<div class="t " style="left:1555.40px;top:814.72px;font-size:19px;font-weight:400;color:#1B2130;letter-spacing:0.164px;">Multiple R...</div>
<div style="position:absolute;left:346.00px;top:840.00px;width:1455.00px;height:2.00px;background:linear-gradient(#F3F5F8 50%, #E4E8F0 50%);"></div>
<div class="t " style="left:394.60px;top:869.56px;font-size:16.5px;font-weight:400;color:#50607F;letter-spacing:0.000px;transform:translateX(-50%);">12</div>
<svg style="position:absolute;left:505px;top:862px" width="16" height="16" viewBox="0 0 16 16"><use href="#task"/></svg>
<div class="t " style="left:534.80px;top:870.30px;font-size:19px;font-weight:400;color:#1B2130;letter-spacing:0.270px;">03_v2 Design Revisions</div>
<div style="position:absolute;left:974.00px;top:853.22px;width:71.00px;height:32.60px;background:#C6ECFB;border-radius:7px;"></div>
<div style="position:absolute;left:978.90px;top:859.02px;width:8.10px;height:21.00px;background:#2F9BDF;border-radius:4px;"></div>
<div class="t " style="left:994.90px;top:870.30px;font-size:19px;font-weight:400;color:#1B2130;letter-spacing:0.056px;">New</div>
<div class="t " style="left:1121.20px;top:870.30px;font-size:19px;font-weight:400;color:#1B2130;letter-spacing:0.830px;">24/01/2024</div>
<div class="t " style="left:1263.80px;top:870.30px;font-size:19px;font-weight:400;color:#D42A42;letter-spacing:0.886px;">01/02/2024</div>
<div class="t " style="left:1403.00px;top:870.30px;font-size:19px;font-weight:400;color:#1B2130;letter-spacing:0.445px;">Active</div>
<div style="position:absolute;left:1545.20px;top:853.22px;width:125.60px;height:32.60px;background:#EDF0F6;border-radius:8px;"></div>
<div class="t " style="left:1555.40px;top:870.30px;font-size:19px;font-weight:400;color:#1B2130;letter-spacing:0.164px;">Multiple R...</div>
<div style="position:absolute;left:346.00px;top:896.00px;width:1455.00px;height:2.00px;background:linear-gradient(#F3F5F8 50%, #E4E8F0 50%);"></div>
<div class="t " style="left:394.60px;top:925.14px;font-size:16.5px;font-weight:400;color:#50607F;letter-spacing:0.000px;transform:translateX(-50%);">13</div>
<svg style="position:absolute;left:505px;top:917px" width="16" height="16" viewBox="0 0 16 16"><use href="#task"/></svg>
<div class="t " style="left:534.80px;top:925.88px;font-size:19px;font-weight:400;color:#1B2130;letter-spacing:0.190px;">04_v2 Stakeholder Revisions Re</div>
<div style="position:absolute;left:974.00px;top:908.76px;width:71.00px;height:32.60px;background:#C6ECFB;border-radius:7px;"></div>
<div style="position:absolute;left:978.90px;top:914.56px;width:8.10px;height:21.00px;background:#2F9BDF;border-radius:4px;"></div>
<div class="t " style="left:994.90px;top:925.88px;font-size:19px;font-weight:400;color:#1B2130;letter-spacing:0.056px;">New</div>
<div class="t " style="left:1121.20px;top:925.88px;font-size:19px;font-weight:400;color:#1B2130;letter-spacing:0.830px;">02/02/2024</div>
<div class="t " style="left:1263.80px;top:925.88px;font-size:19px;font-weight:400;color:#D42A42;letter-spacing:0.886px;">02/02/2024</div>
<div class="t " style="left:1403.00px;top:925.88px;font-size:19px;font-weight:400;color:#1B2130;letter-spacing:0.445px;">Active</div>
<div style="position:absolute;left:1545.20px;top:908.76px;width:125.60px;height:32.60px;background:#EDF0F6;border-radius:8px;"></div>
<div class="t " style="left:1555.40px;top:925.88px;font-size:19px;font-weight:400;color:#1B2130;letter-spacing:0.164px;">Multiple R...</div>
<div style="position:absolute;left:346.00px;top:951.00px;width:1455.00px;height:2.00px;background:linear-gradient(#F3F5F8 50%, #E4E8F0 50%);"></div>
<div class="t " style="left:394.60px;top:980.72px;font-size:16.5px;font-weight:400;color:#50607F;letter-spacing:0.000px;transform:translateX(-50%);">14</div>
<svg style="position:absolute;left:505px;top:973px" width="16" height="16" viewBox="0 0 16 16"><use href="#task"/></svg>
<div class="t " style="left:534.80px;top:981.46px;font-size:19px;font-weight:400;color:#1B2130;letter-spacing:0.000px;">05_v1 Adaptations</div>
<div style="position:absolute;left:974.00px;top:964.31px;width:71.00px;height:32.60px;background:#C6ECFB;border-radius:7px;"></div>
<div style="position:absolute;left:978.90px;top:970.11px;width:8.10px;height:21.00px;background:#2F9BDF;border-radius:4px;"></div>
<div class="t " style="left:994.90px;top:981.46px;font-size:19px;font-weight:400;color:#1B2130;letter-spacing:0.056px;">New</div>
<div class="t " style="left:1121.20px;top:981.46px;font-size:19px;font-weight:400;color:#1B2130;letter-spacing:0.830px;">05/02/2024</div>
<div class="t " style="left:1263.80px;top:981.46px;font-size:19px;font-weight:400;color:#D42A42;letter-spacing:0.886px;">06/02/2024</div>
<div class="t " style="left:1403.00px;top:981.46px;font-size:19px;font-weight:400;color:#1B2130;letter-spacing:0.445px;">Active</div>
<div style="position:absolute;left:1545.20px;top:964.31px;width:125.60px;height:32.60px;background:#EDF0F6;border-radius:8px;"></div>
<div class="t " style="left:1555.40px;top:981.46px;font-size:19px;font-weight:400;color:#1B2130;letter-spacing:0.164px;">Multiple R...</div>
<svg style="position:absolute;left:843.3px;top:242px;border-radius:9px" width="32.4" height="33" viewBox="0 0 64 64" preserveAspectRatio="none"><use href="#av"/></svg>
<div class="t " style="left:887.00px;top:258.59px;font-size:18.5px;font-weight:400;color:#1B2130;letter-spacing:-0.003px;">Lisa...</div>
<div style="position:absolute;left:1724.30px;top:237.00px;width:60.30px;height:42.50px;box-sizing:border-box;background:#EFF2F6;border:1.3px solid #D3DAE6;border-radius:10px;"></div>
<div style="position:absolute;left:1795.70px;top:237.00px;width:34.30px;height:42.50px;box-sizing:border-box;background:#EFF2F6;border:1.3px solid #D3DAE6;border-radius:10px;"></div>
<svg style="position:absolute;left:1742.00px;top:243.00px;overflow:visible;" width="26.00" height="31.00" viewBox="1742.00 243.00 26.00 31.00"><path d="M1744.6 243.9 H1760 L1766 249.9 V271.6 Q1766 273 1764.6 273 H1744.6 Q1743.3 273 1743.3 271.6 V245.3 Q1743.3 243.9 1744.6 243.9 Z" fill="#3B7CE9"/><path d="M1760 243.9 L1766 249.9 H1760 Z" fill="#A8C6F6"/></svg>
<div class="t " style="left:1754.80px;top:260.66px;font-size:16px;font-weight:700;color:#fff;letter-spacing:0.000px;transform:translateX(-50%);">W</div></div>
<div class="layer" id="L_footer" style="clip-path: inset(1px 1px 1px 346px);"><div style="position:absolute;left:346.00px;top:974.00px;width:1455.00px;height:54.00px;background:linear-gradient(#FFFFFF, #FCFCFD 40%, #EDEEF0);border-top:1px solid #E3E7EE;box-sizing:border-box;box-shadow:0 -3px 8px rgba(30,40,70,0.035);"></div>
<svg style="position:absolute;left:437.00px;top:993.00px;overflow:visible;" width="21.00" height="20.00" viewBox="437.00 993.00 21.00 20.00"><path d="M447.4 995 V1009.8 M440 1002.4 H454.8" stroke="#1B2130" stroke-width="1.4"/></svg>
<div class="t " style="left:469.60px;top:1003.49px;font-size:18.5px;font-weight:400;color:#1B2130;letter-spacing:0.610px;">Item</div>
<svg style="position:absolute;left:518.00px;top:993.00px;overflow:visible;" width="52.00" height="19.00" viewBox="518.00 993.00 52.00 19.00"><path d="M521.4 1002.8 L527 997.2 L532.6 1002.8" fill="none" stroke="#8C9AB6" stroke-width="1.4" stroke-linecap="square" stroke-linejoin="miter"/><path d="M544.5 996.8 L551.6 1003.6 H547.9 V1009.2 H541.1 V1003.6 H537.4 Z" fill="none" stroke="#8C9AB6" stroke-width="1.4" stroke-linejoin="miter"/></svg>
<div class="t " style="left:554.40px;top:1003.49px;font-size:18.5px;font-weight:400;color:#8C9AB6;letter-spacing:0.000px;">N</div></div>
<div class="layer" id="L_menu" style=""><div style="position:absolute;left:263.70px;top:55.30px;width:406.30px;height:593.20px;background:#fff;border-radius:16px;box-shadow:0 5px 16px rgba(45,62,115,0.17), 0 1px 3px rgba(45,62,115,0.06);"></div>
<svg style="position:absolute;left:297.7px;top:78.3px;border-radius:14px" width="64.6" height="64.6" viewBox="0 0 64 64" preserveAspectRatio="none"><use href="#av"/></svg>
<div class="t " style="left:378.10px;top:95.49px;font-size:18.5px;font-weight:400;color:#141A2B;letter-spacing:0.930px;-webkit-text-stroke:0.6px currentColor;">Lisa Simpson</div>
<div class="t " style="left:378.20px;top:127.88px;font-size:16.5px;font-weight:400;color:#2B3245;letter-spacing:0.172px;">Empty</div>
<div style="position:absolute;left:296.00px;top:154.20px;width:341.60px;height:1.40px;background:#DFE5EE;"></div>
<div class="t " style="left:296.40px;top:200.21px;font-size:17px;font-weight:400;color:#4F6080;letter-spacing:0.428px;-webkit-text-stroke:0.45px currentColor;">[Self Service Team] Enterprise Pinnacle</div>
<div class="t " style="left:296.40px;top:227.11px;font-size:17px;font-weight:400;color:#4F6080;letter-spacing:-0.057px;-webkit-text-stroke:0.45px currentColor;">Plan</div>
<div class="t " style="left:298.00px;top:270.99px;font-size:18.5px;font-weight:400;color:#1C2233;letter-spacing:0.701px;">Settings</div>
<div class="t " style="left:298.00px;top:317.07px;font-size:18.5px;font-weight:400;color:#1C2233;letter-spacing:0.486px;">Workspace appearance</div>
<div class="t " style="left:297.00px;top:363.15px;font-size:18.5px;font-weight:400;color:#1C2233;letter-spacing:0.486px;">Recycle bin</div>
<div class="t " style="left:298.00px;top:409.23px;font-size:18.5px;font-weight:400;color:#1C2233;letter-spacing:0.577px;">Apps &amp; Integrations</div>
<div class="t " style="left:297.00px;top:455.31px;font-size:18.5px;font-weight:400;color:#1C2233;letter-spacing:0.690px;">Mobile apps</div>
<div class="t " style="left:297.00px;top:501.39px;font-size:18.5px;font-weight:400;color:#1C2233;letter-spacing:0.914px;">Help</div>
<div class="t " style="left:297.00px;top:547.47px;font-size:18.5px;font-weight:400;color:#1C2233;letter-spacing:0.528px;">Privacy policy</div>
<div style="position:absolute;left:296.40px;top:579.70px;width:341.10px;height:1.40px;background:#DFE5EE;"></div>
<div class="t " style="left:297.00px;top:614.99px;font-size:18.5px;font-weight:400;color:#1C2233;letter-spacing:0.736px;">Log out</div></div>
<div class="layer" id="L_anno" style=""><svg style="position:absolute;left:263.5px;top:22px;border-radius:9px" width="33.2" height="33.2" viewBox="0 0 64 64" preserveAspectRatio="none"><use href="#av"/></svg>
<div style="position:absolute;left:254.20px;top:10.80px;width:52.80px;height:55.00px;box-sizing:border-box;border:6px solid #07CF62;border-radius:13px;"></div>
<div style="position:absolute;left:278.00px;top:247.00px;width:170.80px;height:44.80px;box-sizing:border-box;border:6px solid #07CF62;border-radius:12px;"></div>
<div style="position:absolute;left:197.90px;top:15.90px;width:59.60px;height:59.60px;border-radius:50%;background:rgba(11,203,98,0.2);"></div>
<div style="position:absolute;left:207.10px;top:25.10px;width:41.20px;height:41.20px;border-radius:50%;background:#07CF62;"></div>
<svg style="position:absolute;left:220.00px;top:35.00px;overflow:visible;" width="14.00" height="21.00" viewBox="220.00 35.00 14.00 21.00"><path d="M227.2 37.6 H229.9 V54.2 H226.9 V41.8 L223.6 43.6 V40.4 Z" fill="#fff"/></svg>
<div style="position:absolute;left:225.70px;top:246.10px;width:62.60px;height:62.60px;border-radius:50%;background:rgba(11,203,98,0.2);"></div>
<div style="position:absolute;left:236.10px;top:256.50px;width:41.80px;height:41.80px;border-radius:50%;background:#07CF62;"></div>
<div class="t " style="left:256.30px;top:276.76px;font-size:25.5px;font-weight:400;color:#fff;letter-spacing:0.000px;transform:translateX(-50%);-webkit-text-stroke:1.1px #fff;">2</div></div>
<div class="layer" id="L_frame" style=""><svg style="position:absolute;left:0;top:0" width="1802" height="1029" viewBox="0 0 1802 1029"><path fill-rule="evenodd" fill="#0c0c0c" d="M0 0 H1802 V1029 H0 Z M1 1 H1801 V1019 Q1801 1028 1792 1028 H10 Q1 1028 1 1019 Z"/></svg></div>
</body></html>
